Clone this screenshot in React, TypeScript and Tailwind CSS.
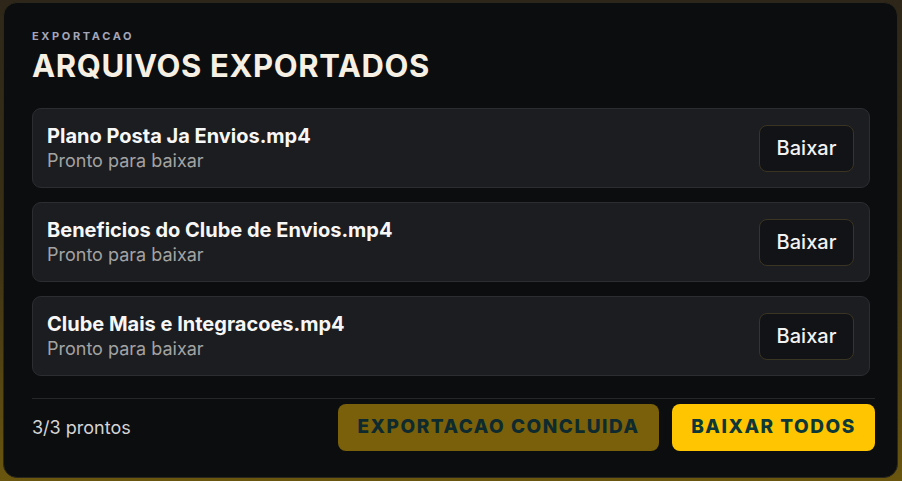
import React from 'react';

const FILES = [
  { id: 1, name: 'Plano Posta Ja Envios.mp4', status: 'Pronto para baixar' },
  { id: 2, name: 'Beneficios do Clube de Envios.mp4', status: 'Pronto para baixar' },
  { id: 3, name: 'Clube Mais e Integracoes.mp4', status: 'Pronto para baixar' },
];

const App = () => {
  return (
    <div
      className="w-[902px] h-[481px] overflow-hidden bg-gradient-to-b from-[#2e2719] via-[#3a3014] to-[#6a560e] pt-[2px] pl-[3px]"
      style={{ fontFamily: 'Inter, "Noto Sans", sans-serif' }}
    >
      <div className="w-[895px] h-[476px] rounded-[14px] border border-[#2b271c] bg-[#0c0d0f] pl-[28px] pr-[22px] pt-[25px]">
        <p className="text-[11px] leading-[16px] font-bold tracking-[0.24em] text-[#a3a6b8]">EXPORTACAO</p>
        <h1 className="mt-[2px] text-[31px] leading-[40px] font-bold tracking-[0.02em] text-[#f6f0e4]">
          ARQUIVOS EXPORTADOS
        </h1>

        <div className="mt-[22px] w-[838px] flex flex-col gap-[14px]">
          {FILES.map((file) => (
            <div
              key={file.id}
              className="h-[80px] rounded-[9px] border border-[#2c2d31] bg-[#1c1d20] pl-[14px] pr-[15px] flex items-center justify-between"
            >
              <div className="flex flex-col">
                <span className="text-[20px] leading-[26px] font-bold text-[#f7f7f7]">{file.name}</span>
                <span className="text-[18px] leading-[24px] text-[#a3a3a3]">{file.status}</span>
              </div>
              <button className="w-[95px] h-[47px] rounded-[8px] border border-[#3a3422] bg-[#121316] text-[20px] font-medium text-[#f2f2f2]">
                Baixar
              </button>
            </div>
          ))}
        </div>

        <div className="mt-[22px] border-t border-[#26272b] pt-[5px] flex items-center justify-between">
          <span className="text-[18px] text-[#d4d4d4]">3/3 prontos</span>
          <div className="flex items-center gap-[13px]">
            <button className="w-[321px] h-[47px] rounded-[8px] bg-[#7a600a] text-[19px] font-extrabold tracking-[0.08em] text-[#0e2a2e]">
              EXPORTACAO CONCLUIDA
            </button>
            <button className="w-[203px] h-[47px] rounded-[8px] bg-[#ffc600] text-[19px] font-extrabold tracking-[0.08em] text-[#0e3838]">
              BAIXAR TODOS
            </button>
          </div>
        </div>
      </div>
    </div>
  );
};

export default App;
